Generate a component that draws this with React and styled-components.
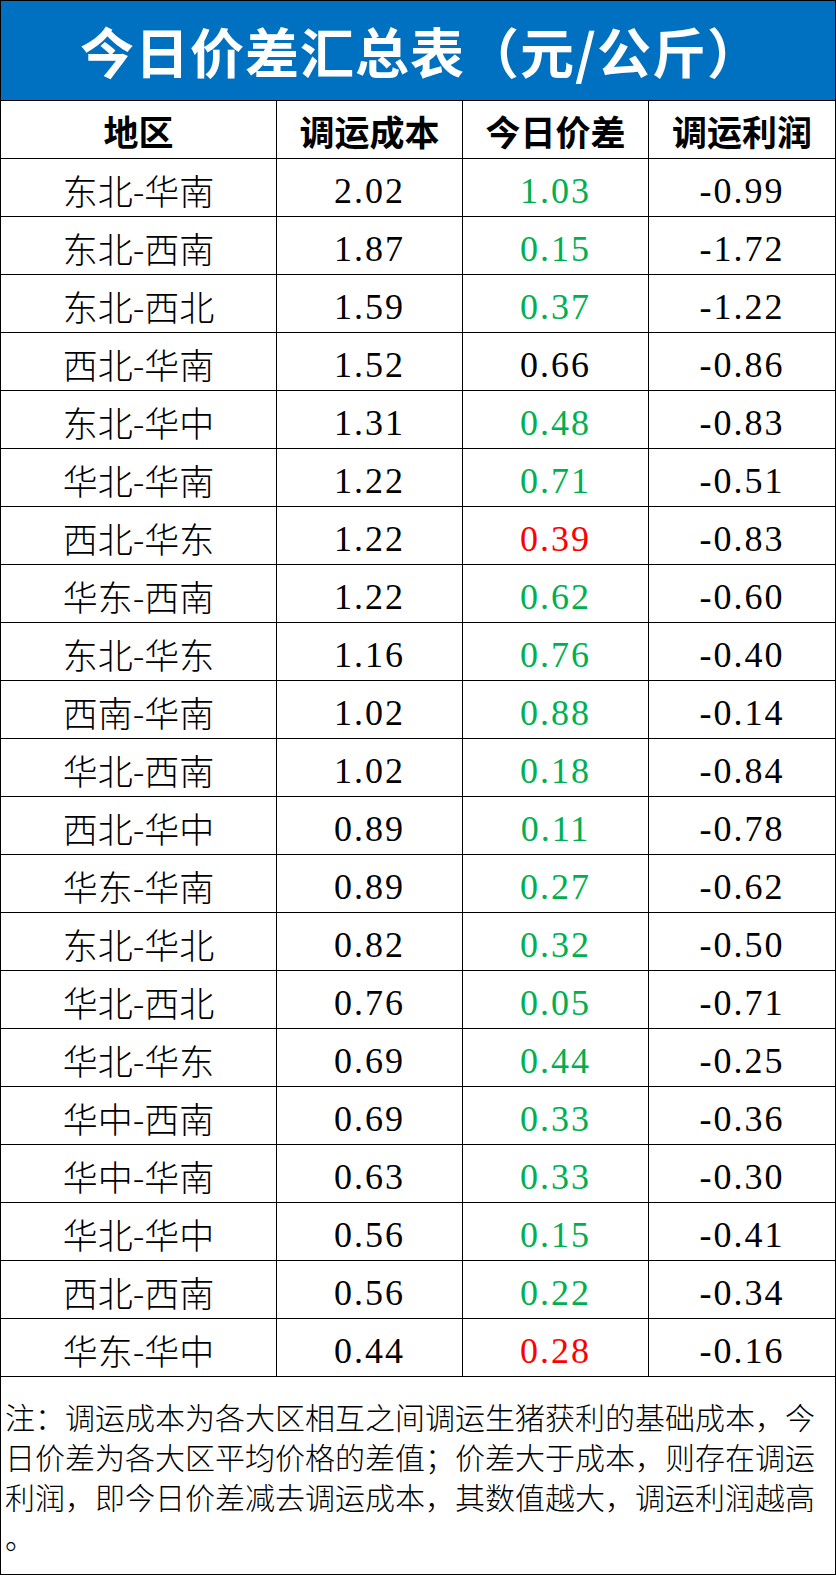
import styled, { createGlobalStyle } from "styled-components"

const GlobalStyle = createGlobalStyle`
    * {
        box-sizing: border-box;
    }

    body {
        margin: 0;
        background: #fff;
        font-family: "Noto Sans CJK SC", sans-serif;
    }
`

const rows = [
    ["东北-华南", "2.02", "1.03", "-0.99", "green"],
    ["东北-西南", "1.87", "0.15", "-1.72", "green"],
    ["东北-西北", "1.59", "0.37", "-1.22", "green"],
    ["西北-华南", "1.52", "0.66", "-0.86", "black"],
    ["东北-华中", "1.31", "0.48", "-0.83", "green"],
    ["华北-华南", "1.22", "0.71", "-0.51", "green"],
    ["西北-华东", "1.22", "0.39", "-0.83", "red"],
    ["华东-西南", "1.22", "0.62", "-0.60", "green"],
    ["东北-华东", "1.16", "0.76", "-0.40", "green"],
    ["西南-华南", "1.02", "0.88", "-0.14", "green"],
    ["华北-西南", "1.02", "0.18", "-0.84", "green"],
    ["西北-华中", "0.89", "0.11", "-0.78", "green"],
    ["华东-华南", "0.89", "0.27", "-0.62", "green"],
    ["东北-华北", "0.82", "0.32", "-0.50", "green"],
    ["华北-西北", "0.76", "0.05", "-0.71", "green"],
    ["华北-华东", "0.69", "0.44", "-0.25", "green"],
    ["华中-西南", "0.69", "0.33", "-0.36", "green"],
    ["华中-华南", "0.63", "0.33", "-0.30", "green"],
    ["华北-华中", "0.56", "0.15", "-0.41", "green"],
    ["西北-西南", "0.56", "0.22", "-0.34", "green"],
    ["华东-华中", "0.44", "0.28", "-0.16", "red"],
]

const colors = {
    green: "#00b050",
    red: "#ff0000",
    black: "#000",
}

export default function App() {
    return (
        <>
            <GlobalStyle />
            <Sheet>
                <Title>今日价差汇总表（元/公斤）</Title>

                <Row>
                    <HeadCell>地区</HeadCell>
                    <HeadCell>调运成本</HeadCell>
                    <HeadCell>今日价差</HeadCell>
                    <HeadCell>调运利润</HeadCell>
                </Row>

                {rows.map(([area, cost, diff, profit, tone], i) => (
                    <Row key={i}>
                        <AreaCell>{area}</AreaCell>
                        <NumCell>{cost}</NumCell>
                        <NumCell $color={colors[tone]}>{diff}</NumCell>
                        <NumCell>{profit}</NumCell>
                    </Row>
                ))}

                <Note>
                    注：调运成本为各大区相互之间调运生猪获利的基础成本，今日价差为各大区平均价格的差值；价差大于成本，则存在调运利润，即今日价差减去调运成本，其数值越大，调运利润越高。
                </Note>
            </Sheet>
        </>
    )
}

const Sheet = styled.div`
    width: 836px;
    height: 1575px;
    border: 1px solid #000;
    display: flex;
    flex-direction: column;
    background: #fff;
`

const Title = styled.h1`
    margin: 0;
    height: 100px;
    background: #0070c0;
    border-bottom: 1px solid #000;
    color: #fff;
    font-family: "Noto Sans CJK SC", sans-serif;
    font-size: 54px;
    font-weight: 700;
    letter-spacing: 1px;
    display: flex;
    align-items: center;
    justify-content: center;
    padding-left: 6px;
`

const Row = styled.div`
    display: grid;
    grid-template-columns: 276px 186px 186px 1fr;
    height: 58px;
    border-bottom: 1px solid #000;
`

const Cell = styled.div`
    display: flex;
    align-items: center;
    justify-content: center;
    color: #000;
    border-right: 1px solid #000;

    &:last-child {
        border-right: none;
    }
`

const HeadCell = styled(Cell)`
    font-family: "Noto Sans CJK SC", sans-serif;
    font-size: 35px;
    font-weight: 700;
    padding-top: 2px;
`

const AreaCell = styled(Cell)`
    font-family: "Noto Sans CJK SC", sans-serif;
    font-size: 35px;
    font-weight: 300;
    padding-top: 4px;
`

const NumCell = styled(Cell)`
    font-family: "Liberation Serif", serif;
    font-size: 36px;
    letter-spacing: 2px;
    padding-top: 6px;
    color: ${props => props.$color || "#000"};
`

const Note = styled.div`
    flex: 1;
    padding: 19px 4px 0 4px;
    font-family: "Noto Sans CJK SC", sans-serif;
    font-size: 30px;
    font-weight: 300;
    line-height: 40px;
    color: #000;
    line-break: anywhere;
    word-break: break-all;
`
